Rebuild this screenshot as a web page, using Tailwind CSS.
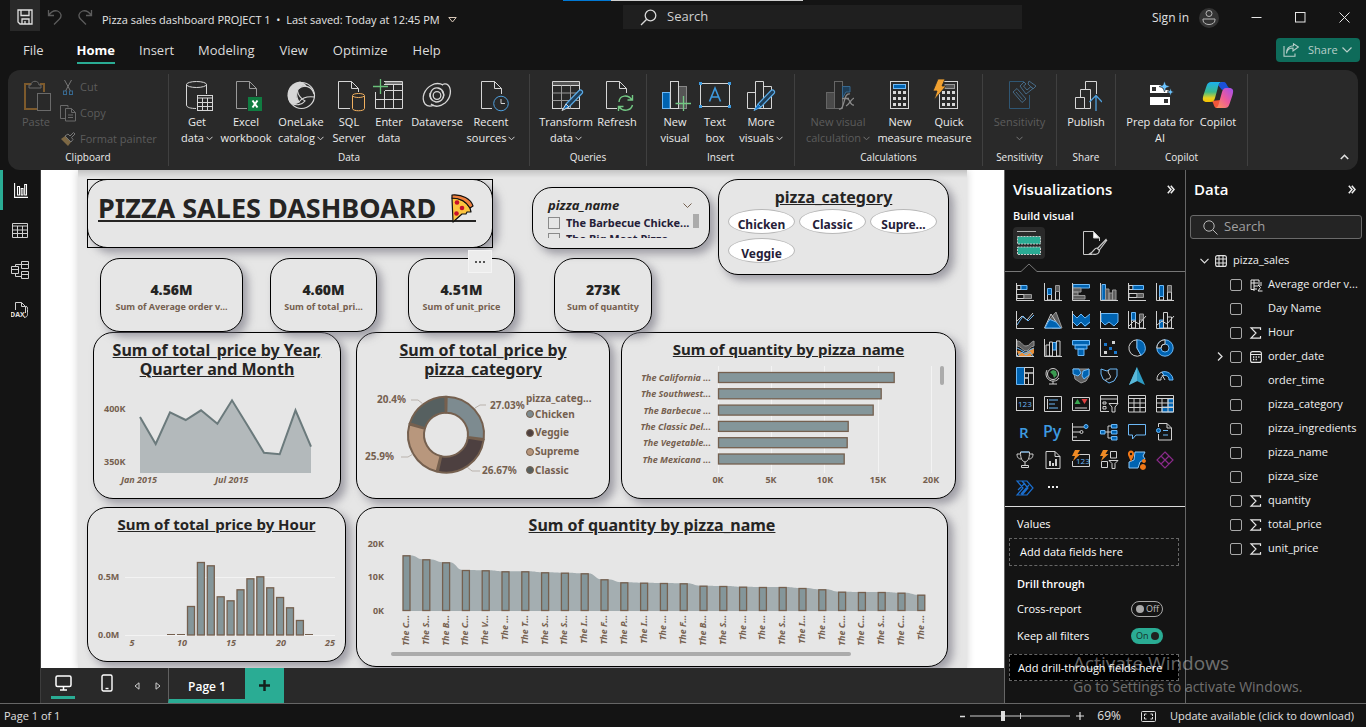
<!DOCTYPE html>
<html lang="en">
<head>
<meta charset="utf-8">
<title>Pizza sales dashboard PROJECT 1</title>
<script src="https://cdn.jsdelivr.net/npm/@tailwindcss/browser@4"></script>
</head>
<body class="flex h-screen flex-col overflow-hidden bg-[#141414] font-['Open_Sans','Noto_Sans',sans-serif] text-[11px] text-white">

<!-- title bar -->
<header class="relative flex h-9 shrink-0 items-start pl-[10px]">
  <div class="absolute left-[563px] top-0 flex h-px w-[240px]"><span class="w-12 bg-[#0078d4]"></span><span class="flex-1 bg-[#d0d0d0]"></span></div>
  <button aria-label="Save" class="flex h-[31px] w-[30px] items-center justify-center bg-[#292929] pt-[3px]">
    <svg width="16" height="16" viewBox="0 0 16 16" fill="none" stroke="#e0e0e0" stroke-width="1.3"><path d="M1 1H15V15H3L1 13ZM4 1V6.500H12V1M5 15V10H12V15M8 12V15"/></svg>
  </button>
  <button aria-label="Undo" class="ml-[7px] mt-[9px]"><svg width="16" height="16" viewBox="0 0 16 16" fill="none" stroke="#5c5c5c" stroke-width="1.3"><path d="M1.500 1V6.500H7M1.500 6.500C4 3 7 1 10.500 2C14.500 3.500 15 7.500 12.500 10L7 15.500"/></svg></button>
  <button aria-label="Redo" class="ml-[14px] mt-[9px]"><svg width="16" height="16" viewBox="0 0 16 16" fill="none" stroke="#5c5c5c" stroke-width="1.3"><path d="M14.500 1V6.500H9M14.500 6.500C12 3 9 1 5.500 2C1.500 3.500 1 7.500 3.500 10L9 15.500"/></svg></button>
  <button class="ml-[9px] mt-[11px] flex w-[365px] items-center gap-2 whitespace-nowrap leading-[18px] text-[#e6e6e6]">Pizza sales dashboard PROJECT 1 &nbsp;•&nbsp; Last saved: Today at 12:45 PM
    <svg width="9" height="6" viewBox="0 0 9 6" fill="none" stroke="#d8c8b8"><path d="M.8.5H8.200L4.500 5Z"/></svg></button>
  <label class="ml-[156px] mt-[5px] flex h-6 w-[399px] items-center bg-[#1f1f1f] pl-[17px]">
    <svg width="17" height="17" viewBox="0 0 17 17" fill="none" stroke="#d8d8d8" stroke-width="1.3"><circle cx="10.500" cy="6.500" r="5.300"/><path d="M6.700 10.300L1 16"/></svg>
    <input aria-label="Search" placeholder="Search" class="ml-[10px] w-[300px] bg-transparent text-[13px] outline-none placeholder:text-[#d0d0d0]">
  </label>
  <div class="ml-auto flex h-[35px] items-center">
    <button class="text-[12px] text-[#e0e0e0]">Sign in</button>
    <svg class="ml-[10px]" width="20" height="20" viewBox="0 0 20 20" fill="none" stroke="#b8b8b8"><circle cx="10" cy="10" r="10" fill="#333" stroke="none"/><circle cx="10" cy="5.500" r="3"/><path d="M4 11H16V12C16 18 4 18 4 12Z"/></svg>
    <button aria-label="Minimize" class="ml-[32px]"><svg width="11" height="11" viewBox="0 0 11 11" stroke="#e6e6e6"><path d="M.5 5.500H10.500"/></svg></button>
    <button aria-label="Maximize" class="ml-[33px]"><svg width="11" height="11" viewBox="0 0 11 11" fill="none" stroke="#e6e6e6"><rect x=".5" y=".5" width="9.500" height="9.500"/></svg></button>
    <button aria-label="Close" class="ml-[33px] mr-[16px]"><svg width="11" height="11" viewBox="0 0 11 11" stroke="#e6e6e6"><path d="M.5.5L10.500 10.500M10.500.5L.5 10.500"/></svg></button>
  </div>
</header>

<!-- ribbon tabs -->
<nav class="flex h-[34px] shrink-0 items-start pl-[23px] pr-[6px] text-[13px] leading-[28px] text-[#dcdcdc]">
  <a href="#" class="mr-[33px]">File</a>
  <a href="#" class="mr-[24px] h-[28px] border-b-2 border-[#2aac94] font-bold text-white">Home</a>
  <a href="#" class="mr-[24px]">Insert</a>
  <a href="#" class="mr-[25px]">Modeling</a>
  <a href="#" class="mr-[25px]">View</a>
  <a href="#" class="mr-[25px]">Optimize</a>
  <a href="#">Help</a>
  <button class="ml-auto mt-[2px] flex h-6 w-[84px] items-center rounded bg-[#0e6b5a] pl-[7px] text-[11px] text-[#b9cfca]">
    <svg width="16" height="14" viewBox="0 0 16 14" fill="none" stroke="#b9cfca" stroke-width="1.100"><path d="M1 3V13.300H12V10.500M3.500 10.500C4 6.500 6.500 5 10 5V8L15.300 4L10.500.8V2.800C6 3 3.500 6 3.500 10.500Z"/></svg>
    <span class="ml-[9px]">Share</span>
    <svg class="ml-[4px]" width="10" height="6" viewBox="0 0 10 6" fill="none" stroke="#b9cfca" stroke-width="1.200"><path d="M.5.5L5 5L9.500.5"/></svg></button>
</nav>

<!-- ribbon -->
<section aria-label="Ribbon" class="relative mx-2 flex h-[100px] shrink-0 rounded-xl bg-[#292929] py-1 leading-4 text-[#ececec]">
  <div class="flex w-[161px] flex-col border-r border-[#404040]">
    <div class="flex min-h-0 flex-1 text-[#5c5c5c]">
      <button class="ml-[12px] flex w-8 flex-col items-center self-start pt-1.5">
        <svg width="32" height="34" viewBox="0 0 32 34" fill="none"><path d="M11 4H5V29H17M20 4H24V12" stroke="#7d5a2c" stroke-width="2"/><path d="M9 8H21V5H19C19 0 11 0 11 5H9Z" stroke="#6a6a6a"/><rect x="17.500" y="13.500" width="13" height="17" stroke="#6a6a6a" fill="#292929"/></svg>
        <span>Paste</span></button>
      <div class="ml-[8px] flex flex-col">
        <button class="flex h-[26px] shrink-0 items-center gap-[4px]"><svg width="16" height="17" viewBox="0 0 16 17" fill="none"><path d="M4.500 1L10.500 12M11.500 1L5.500 12" stroke="#777"/><rect x="3.500" y="12" width="3" height="3.500" stroke="#36688f"/><rect x="9.500" y="12" width="3" height="3.500" stroke="#36688f"/></svg>Cut</button>
        <button class="flex h-[26px] shrink-0 items-center gap-[4px]"><svg width="16" height="17" viewBox="0 0 16 17" fill="none" stroke="#6a6a6a"><path d="M5 13.500H.5V.5H8V2.500M5.500 3.500H11.500L15.500 7.500V16H5.500ZM11.500 3.500V7.500H15.500M8 10H13M8 12.500H13"/></svg>Copy</button>
        <button class="flex h-[26px] shrink-0 items-center gap-[4px]"><svg width="16" height="17" viewBox="0 0 16 17" fill="none"><path d="M1 8L8 15L11 11L5 5Z" fill="#7d6844"/><path d="M5 5L8 3L10 5L13.500 1.500L15 3L11.500 6.500L13 8.500L11 11Z" stroke="#777"/></svg>Format painter</button>
      </div>
    </div>
    <span class="text-center text-[10px] leading-[18px]">Clipboard</span>
  </div>

  <div class="flex w-[361px] flex-col border-r border-[#404040]">
    <div class="flex min-h-0 flex-1 pl-1">
      <button class="flex w-12 flex-col items-center whitespace-nowrap pt-1.5"><svg class="mb-[2px] shrink-0" width="34" height="32" viewBox="-1 0 34 32" fill="none" stroke="#d6d6d6"><ellipse cx="15.500" cy="4.500" rx="10" ry="3"/><path d="M5.500 4.500V25C5.500 27.500 10 28.500 15 28.500M25.500 4.500V14"/><rect x="16.500" y="15.500" width="15" height="15" fill="#292929"/><path d="M16.500 18H31.500M16.500 22.500H31.500M16.500 26.500H31.500M21.500 18V30.500M26.500 18V30.500"/></svg>Get<span class="flex items-center gap-[2px]">data<svg width="7" height="5" viewBox="0 0 7 5" fill="none" stroke="#d0d0d0"><path d="M.5.8L3.500 3.800L6.500.8"/></svg></span></button>
      <button class="flex w-[50px] flex-col items-center whitespace-nowrap pt-1.5"><svg class="mb-[2px] shrink-0" width="34" height="32" viewBox="-1 0 34 32" fill="none" stroke="#9a9a9a"><path d="M17 28.500H6.500V1.500H19.500L26.500 8.500V16M19.500 1.500V8.500H26.500"/><rect x="18" y="17" width="14" height="14" fill="#107c41" stroke="none"/><path d="M22.500 20.500L27.500 27.500M27.500 20.500L22.500 27.500" stroke="#fff" stroke-width="2"/></svg>Excel<span>workbook</span></button>
      <button class="flex w-[60px] flex-col items-center whitespace-nowrap pt-1.5"><svg class="mb-[2px] shrink-0" width="32" height="32" viewBox="0 0 32 32" fill="none" stroke="#d6d6d6" stroke-width="1.200"><path d="M5 22C1 15 3 4 15 2C17 3 20 4 21 6C16 5 13 8 12 12C11 17 12 19 14 22C11 24 7 24 5 22Z" fill="#d6d6d6"/><circle cx="16.500" cy="15.500" r="13"/><path d="M13 9C19 4 27 6 29 14M14 22C17 18 22 16 29.500 17M6 23C11 26 17 25 20 21C15 18 13 14 12.500 11"/></svg>OneLake<span class="flex items-center gap-[2px]">catalog<svg width="7" height="5" viewBox="0 0 7 5" fill="none" stroke="#d0d0d0"><path d="M.5.8L3.500 3.800L6.500.8"/></svg></span></button>
      <button class="flex w-9 flex-col items-center whitespace-nowrap pt-1.5"><svg class="mb-[2px] shrink-0" width="34" height="32" viewBox="-1 0 34 32" fill="none" stroke="#d6d6d6"><path d="M17 28.500H5.500V1.500H18.500L25.500 8.500V12M18.500 1.500V8.500H25.500"/><g stroke="#f0b060" fill="#292929"><path d="M19.500 16V28.500C19.500 31.500 31.500 31.500 31.500 28.500V16"/><ellipse cx="25.500" cy="15.500" rx="6" ry="2"/></g></svg>SQL<span>Server</span></button>
      <button class="flex w-11 flex-col items-center whitespace-nowrap pt-1.5"><svg class="mb-[2px] shrink-0 overflow-visible" width="32" height="32" viewBox="0 0 32 32" fill="none" stroke="#d6d6d6"><path d="M11 1.500H29.500V28.500H2.500V12M11 4.500H29M12 10.500H29.500M2.500 19.500H29.500M11.500 11V28.500M20.500 4V28.500"/><path d="M12 3H29" stroke="#777" stroke-width="2"/><path d="M0 6.500H15M7.500 -1V14" stroke="#69c07a" stroke-width="1.300"/></svg>Enter<span>data</span></button>
      <button class="flex w-[52px] flex-col items-center whitespace-nowrap pt-1.5"><svg class="mb-[2px] shrink-0" width="32" height="32" viewBox="0 0 32 32" fill="none" stroke="#d6d6d6" stroke-width="1.300"><path d="M22 5C19 3 14 3 11 5C3 9 0 18 4 24C7 27 11 26 13 25"/><path d="M10 24C14 28 20 26 24 23C30 18 31 9 27 5C25 3 22 4 21 5"/><path d="M11 20C7 14 11 7 17 8C22 9 24 14 22 18"/><path d="M21 11C25 16 21 22 15 22C10 21 8 17 9 13"/><circle cx="16" cy="15.500" r="3.800"/></svg>Dataverse</button>
      <button class="flex w-14 flex-col items-center whitespace-nowrap pt-1.5"><svg class="mb-[2px] shrink-0" width="36" height="32" viewBox="-2 0 36 32" fill="none" stroke="#d6d6d6"><path d="M17 28.500H6.500V1.500H19.500L26.500 8.500V14M19.500 1.500V8.500H26.500"/><circle cx="26" cy="23.500" r="7.300" stroke="#4f9fdc" fill="#292929"/><path d="M26 19V23.500H30"/></svg>Recent<span class="flex items-center gap-[2px]">sources<svg width="7" height="5" viewBox="0 0 7 5" fill="none" stroke="#d0d0d0"><path d="M.5.8L3.500 3.800L6.500.8"/></svg></span></button>
    </div>
    <span class="text-center text-[10px] leading-[18px]">Data</span>
  </div>

  <div class="flex w-[117px] flex-col border-r border-[#404040]">
    <div class="flex min-h-0 flex-1 pl-1.5">
      <button class="flex w-[60px] flex-col items-center whitespace-nowrap pt-1.5"><svg class="mb-[2px] shrink-0" width="36" height="32" viewBox="-2 0 36 32" fill="none" stroke="#d6d6d6"><path d="M2.500 5V1.500H29.500V5" fill="#555"/><rect x="2.500" y="5.500" width="27" height="23"/><path d="M2.500 13H29.500M2.500 20.500H29.500M11.500 5.500V28.500M20.500 5.500V28.500" stroke="#999"/><path d="M16 24L29 10.500C31 9 34 11.500 32 13.500L19 27L14.500 28.500Z" stroke="#5aaae6" fill="#1f3e58" stroke-width="1.200"/><path d="M16 24L12 30.500L19 27Z" fill="#0c6cc0"/></svg>Transform<span class="flex items-center gap-[2px]">data<svg width="7" height="5" viewBox="0 0 7 5" fill="none" stroke="#d0d0d0"><path d="M.5.8L3.500 3.800L6.500.8"/></svg></span></button>
      <button class="flex w-[42px] flex-col items-center whitespace-nowrap pt-1.5"><svg class="mb-[2px] shrink-0" width="34" height="32" viewBox="-1 0 34 32" fill="none" stroke="#d6d6d6"><path d="M16 28.500H5.500V1.500H18.500L25.500 8.500V13M18.500 1.500V8.500H25.500"/><g stroke="#73c884" stroke-width="1.400"><path d="M18 22C18.500 15 27 14 31 20M31.500 15V20H26.500M31.500 25C30 31 22 32 18 27M17.500 31V26.500H22.500"/></g></svg>Refresh</button>
    </div>
    <span class="text-center text-[10px] leading-[18px]">Queries</span>
  </div>

  <div class="flex w-[148px] flex-col border-r border-[#404040]">
    <div class="flex min-h-0 flex-1 pl-1.5">
      <button class="flex w-11 flex-col items-center whitespace-nowrap pt-1.5"><svg class="mb-[2px] shrink-0" width="32" height="32" viewBox="0 0 32 32" fill="none"><rect x="19.500" y="6.500" width="8" height="22" fill="#555" stroke="#888"/><rect x="3.500" y="12.500" width="7.500" height="16" fill="#0063b1" stroke="#6cb8f6"/><rect x="11.500" y="1.500" width="8" height="27" fill="#292929" stroke="#d6d6d6"/><path d="M16.500 23.500H32M24.500 16V31" stroke="#73c884" stroke-width="1.300"/></svg>New<span>visual</span></button>
      <button class="flex w-9 flex-col items-center whitespace-nowrap pt-1.5"><svg class="mb-[2px] shrink-0" width="32" height="32" viewBox="0 0 32 32" fill="none"><rect x="1.500" y="3.500" width="29" height="23" stroke="#d6d6d6"/><path d="M0 2H3V5H0ZM29 2H32V5H29ZM0 25H3V28H0ZM29 25H32V28H29Z" fill="#3e9be0"/><path d="M10.500 21.500L16 8L21.500 21.500M12.300 17H19.700" stroke="#3e9be0" stroke-width="1.600"/></svg>Text<span>box</span></button>
      <button class="flex w-14 flex-col items-center whitespace-nowrap pt-1.5"><svg class="mb-[2px] shrink-0" width="32" height="32" viewBox="0 0 32 32" fill="none" stroke="#d6d6d6"><path d="M2.500 12.500H10.500V28.500H2.500ZM10.500 1.500H18.500V28.500H10.500ZM18.500 6.500H26.500V28.500H18.500Z"/><path d="M13 24L26 10.500C28 9 31 11.500 29 13.500L16 27L11.500 28.500Z" stroke="#5aaae6" fill="#1f3e58" stroke-width="1.200"/><path d="M13 24L9 30.500L16 27Z" fill="#0c6cc0" stroke="#5aaae6"/></svg>More<span class="flex items-center gap-[2px]">visuals<svg width="7" height="5" viewBox="0 0 7 5" fill="none" stroke="#d0d0d0"><path d="M.5.8L3.500 3.800L6.500.8"/></svg></span></button>
    </div>
    <span class="text-center text-[10px] leading-[18px]">Insert</span>
  </div>

  <div class="flex w-[188px] flex-col border-r border-[#404040]">
    <div class="flex min-h-0 flex-1 pl-1.5">
      <button class="flex w-[74px] flex-col items-center whitespace-nowrap pt-1.5 text-[#5c5c5c]"><svg class="mb-[2px] shrink-0" width="32" height="32" viewBox="0 0 32 32" fill="none" stroke="#666"><rect x="4.500" y="12.500" width="8" height="16" fill="#4a4a4a"/><rect x="12.500" y="1.500" width="8" height="27"/><path d="M20.500 6.500H28V12H24L20.500 18Z" fill="#1f3e58" stroke="#36688f"/><path d="M17 29C23 31 21 12 28 14M20 18.500H27M25 19C28 18 28 26 32 25M32 18C29 19 28 24 24 26" stroke="#8a8a8a" stroke-width="1.300"/></svg>New visual<span class="flex items-center gap-[2px]">calculation<svg width="7" height="5" viewBox="0 0 7 5" fill="none" stroke="#777"><path d="M.5.8L3.500 3.800L6.500.8"/></svg></span></button>
      <button class="flex w-[50px] flex-col items-center whitespace-nowrap pt-1.5"><svg class="mb-[2px] shrink-0" width="32" height="32" viewBox="0 0 32 32" fill="none"><rect x="6.500" y="1.500" width="18" height="27" stroke="#d6d6d6"/><rect x="9.500" y="4.500" width="12" height="4" fill="#0063b1" stroke="#6cb8f6"/><path d="M9 12.500H22M9 18.500H22M9 24.500H22" stroke="#d6d6d6" stroke-width="3" stroke-dasharray="3 2"/></svg>New<span>measure</span></button>
      <button class="flex w-12 flex-col items-center whitespace-nowrap pt-1.5"><svg class="mb-[2px] shrink-0 overflow-visible" width="34" height="32" viewBox="-1 0 34 32" fill="none"><rect x="6.500" y="1.500" width="18" height="27" stroke="#d6d6d6"/><rect x="12" y="4.500" width="9.500" height="4" fill="#555" stroke="#999"/><path d="M9 12.500H22M9 18.500H22M9 24.500H22" stroke="#d6d6d6" stroke-width="3" stroke-dasharray="3 2"/><path d="M5-1H12L9 6H13L1 20L4 11H0Z" fill="#f0a030" stroke="#292929" stroke-width=".8"/></svg>Quick<span>measure</span></button>
    </div>
    <span class="text-center text-[10px] leading-[18px]">Calculations</span>
  </div>

  <div class="flex w-[74px] flex-col border-r border-[#404040]">
    <button class="flex min-h-0 flex-1 flex-col items-center whitespace-nowrap pt-1.5 text-[#5c5c5c]"><svg class="mb-[2px] shrink-0" width="32" height="32" viewBox="0 0 32 32" fill="none" stroke="#2f5673"><path d="M20 1.500H5.500V28.500H25.500V15" /><path d="M9 12L13 8.500L22 19L18 22.500ZM12 12L18.500 19.500M16 6L20 2L22 4L19.500 6L23 10L27 6.500L29 8.500L22 14ZM25 1L32 6L29 9L24 4Z" stroke="#466a86"/></svg>Sensitivity<svg class="mt-[6px] shrink-0" width="7" height="5" viewBox="0 0 7 5" fill="none" stroke="#777"><path d="M.5.8L3.500 3.800L6.500.8"/></svg></button>
    <span class="text-center text-[10px] leading-[18px]">Sensitivity</span>
  </div>

  <div class="flex w-[59px] flex-col border-r border-[#404040]">
    <button class="flex min-h-0 flex-1 flex-col items-center whitespace-nowrap pt-1.5"><svg class="mb-[2px] shrink-0" width="32" height="32" viewBox="0 0 32 32" fill="none" stroke="#d6d6d6"><path d="M5.500 17.500H14.500V28.500H5.500ZM10.500 17V9.500H20.500V28.500H14.500M15.500 9V1.500H26.500V14"/><path d="M26 31V15.500M19.500 22L26 15.500L32 22" stroke="#4f9fdc" stroke-width="1.300"/></svg>Publish</button>
    <span class="text-center text-[10px] leading-[18px]">Share</span>
  </div>

  <div class="flex w-[132px] flex-col border-r border-[#404040]">
    <div class="flex min-h-0 flex-1 pl-1.5">
      <button class="flex w-[76px] flex-col items-center whitespace-nowrap pt-1.5"><svg class="mb-[2px] shrink-0" width="32" height="32" viewBox="0 0 32 32"><path d="M6 5H17L19 9L26 11V13H6ZM6 17H26V25H6Z" fill="#fff"/><path d="M8 7H12V11H8ZM20 19H24V23H20Z" fill="#333"/><path d="M20.500 1L22 5L26 6.500L22 8L20.500 12L19 8L15 6.500L19 5ZM26.500 8L27.500 11L30 12L27.500 13L26.500 16L25.500 13L23 12L25.500 11Z" fill="#6cc4ff" stroke="#292929" stroke-width=".6"/></svg>Prep data for<span>AI</span></button>
      <button class="flex w-10 flex-col items-center whitespace-nowrap pt-1.5"><svg class="mb-[2px] shrink-0" width="32" height="32" viewBox="0 0 32 32"><defs><linearGradient id="ca" x1="0" y1="0" x2="0" y2="1"><stop offset="0" stop-color="#1ab0f0"/><stop offset=".5" stop-color="#3cb98a"/><stop offset=".8" stop-color="#e8d020"/><stop offset="1" stop-color="#f5c000"/></linearGradient><linearGradient id="cb" x1="1" y1="0" x2="0" y2="1"><stop offset="0" stop-color="#a050f0"/><stop offset=".5" stop-color="#ee5a9a"/><stop offset="1" stop-color="#ff9a50"/></linearGradient></defs>
        <path d="M19 2H22C25 2 25 8 28 8L20 10L16 5Z" fill="#1a50d8"/><path d="M9 21C12 21 11 28 15 28H20L19 20Z" fill="#f0563a"/>
        <path d="M9 2H20C17 2 16.500 5 15.500 9L13 18C12 21 11 22 8 22H5C1 22 0 20 1.500 15L4.500 6C5.500 3 7 2 9 2Z" fill="url(#ca)"/><path d="M23 28H13C16 28 16.500 25 17.500 21L20 12C21 9 22 8 24 8H27C31 8 32 10 30.500 15L27.500 24C26.500 27 25 28 23 28Z" fill="url(#cb)"/></svg>Copilot</button>
    </div>
    <span class="text-center text-[10px] leading-[18px]">Copilot</span>
  </div>
  <button aria-label="Collapse ribbon" class="mb-[6px] ml-auto mr-[9px] self-end"><svg width="9" height="6" viewBox="0 0 9 6" fill="none" stroke="#e0e0e0" stroke-width="1.600"><path d="M.8 5L4.500 1.300L8.200 5"/></svg></button>
</section>

<main class="flex min-h-0 flex-1">
  <!-- view switcher -->
  <nav class="flex w-[41px] shrink-0 flex-col border-r border-[#3c3c3c]">
    <button aria-label="Report view" class="flex h-10 items-center border-l-[3px] border-[#2aac94] pl-[11px]"><svg width="14" height="15" viewBox="0 0 14 15" fill="none" stroke="#fff" stroke-width="1.100"><path d="M.6 0V14.400H14M3.500 3.500H5.500V12H3.500ZM7.200 5.500H9V12H7.200ZM10.700 1.500H12.500V12H10.700Z"/></svg></button>
    <button aria-label="Table view" class="flex h-10 items-center justify-center"><svg width="16" height="15" viewBox="0 0 16 15" fill="none" stroke="#d0d0d0"><path d="M.5.5H15.500V14.500H.5ZM.5 3H15.500M.5 7H15.500M.5 10.500H15.500M5.500 3V14.500M10.500 3V14.500"/></svg></button>
    <button aria-label="Model view" class="flex h-10 items-center justify-center"><svg width="18" height="18" viewBox="0 0 18 18" fill="none" stroke="#d0d0d0"><path d="M.5 5.500H7.500V12.500H.5ZM.5 8.500H7.500M10.500.5H17.500V7.500H10.500ZM10.500 3.500H17.500M10.500 10.500H17.500V17.500H10.500ZM10.500 13.500H17.500M4.500 5V3.500H10M4.500 13V15.500H10"/></svg></button>
    <button aria-label="DAX query view" class="flex h-10 items-center justify-center"><svg width="18" height="18" viewBox="0 0 18 18" fill="none" stroke="#d0d0d0"><path d="M4.500 9V1.500H10.500L14.500 5.500V12M10.500 1.500V5.500H14.500M15 5C17 6 16.500 8 16.500 10C16.500 14 17 16 13 16.500"/><text x="-1" y="16" font-size="7" font-weight="bold" fill="#e0e0e0" stroke="none">DAX</text></svg></button>
  </nav>

  <div class="flex min-w-0 flex-1 flex-col">
    <!-- report canvas -->
    <section id="canvas" class="min-h-0 flex-1 overflow-hidden bg-white font-['Noto_Sans',sans-serif] font-bold text-[#252423]">
      <div class="relative mx-auto h-full w-[889px] bg-[#e6e6e6] shadow-[0_0_8px_#cfcfcf]">
        <div class="absolute inset-x-0 top-0 h-2 bg-gradient-to-b from-black/15 to-transparent"></div>

        <article class="absolute left-[15px] top-[162px] flex h-[167px] w-[248px] flex-col rounded-[20px] border border-black bg-[#e6e6e6] pt-[8px] shadow-[5px_5px_9px_#6e6c7a99]">
          <h2 class="text-center text-[16px] leading-[19px] underline">Sum of total_price by Year,<br>Quarter and Month</h2>
          <svg width="246" height="118" viewBox="94 379 246 118" font-size="9" fill="#75604f"><path d="M140 417L155.700 444L170 412.300L185.700 420L201 410.300L217.400 423.700L232 400.300L248.300 426.700L264 452.700L279.700 454.300L295.500 410.300L311 446.700V473H140Z" fill="#b3b9bb"/><path d="M140 417L155.700 444L170 412.300L185.700 420L201 410.300L217.400 423.700L232 400.300L248.300 426.700L264 452.700L279.700 454.300L295.500 410.300L311 446.700" fill="none" stroke="#6b7a7c" stroke-width="2"/>
            <text x="104" y="412">400K</text><text x="104" y="465">350K</text><g font-style="italic"><text x="121" y="483">Jan 2015</text><text x="215" y="483">Jul 2015</text></g></svg>
        </article>

        <article class="absolute left-[278px] top-[162px] flex h-[167px] w-[254px] flex-col rounded-[20px] border border-black bg-[#e6e6e6] pt-[8px] shadow-[5px_5px_9px_#6e6c7a99]">
          <h2 class="text-center text-[16px] leading-[19px] underline">Sum of total_price by<br>pizza_category</h2>
          <svg width="252" height="118" viewBox="357 379 252 118" font-size="10" fill="#75604f"><g id="donut" stroke="#75604f" stroke-width="2"></g>
            <path d="M411 400H418L423 404M475 408L480 405H486M401 457H408L413 454M467 467L472 471H480" fill="none" stroke="#b9b2ac"/>
            <text x="377" y="403">20.4%</text><text x="490" y="409">27.03%</text><text x="365" y="460">25.9%</text><text x="482" y="474">26.67%</text><text x="526" y="402">pizza_categ...</text>
            <g stroke="#75604f"><circle cx="530" cy="414" r="3.500" fill="#7d8b90"/><circle cx="530" cy="433" r="3.500" fill="#4d4040"/><circle cx="530" cy="452" r="3.500" fill="#b8977d"/><circle cx="530" cy="470" r="3.500" fill="#566060"/></g>
            <text x="535" y="418">Chicken</text><text x="535" y="436">Veggie</text><text x="535" y="455">Supreme</text><text x="535" y="474">Classic</text></svg>
        </article>

        <article class="absolute left-[543px] top-[162px] flex h-[167px] w-[335px] flex-col rounded-[20px] border border-black bg-[#e6e6e6] pt-[6px] shadow-[5px_5px_9px_#6e6c7a99]">
          <h2 class="text-center text-[15px] leading-[20px] underline">Sum of quantity by pizza_name</h2>
          <svg width="333" height="138" viewBox="622 359 333 138" font-size="9" fill="#75604f"><path d="M718.500 366V473M771.500 366V473M824.500 366V473M878.500 366V473M931.500 366V473" stroke="#f3f3f3"/><rect x="940" y="366" width="4" height="19" rx="2" fill="#ababab"/><g id="hbars"></g>
            <g text-anchor="middle"><text x="718" y="483">0K</text><text x="771" y="483">5K</text><text x="825" y="483">10K</text><text x="878" y="483">15K</text><text x="931" y="483">20K</text></g></svg>
        </article>

        <article class="absolute left-[9px] top-[337px] flex h-[155px] w-[259px] flex-col rounded-[20px] border border-black bg-[#e6e6e6] pt-[6px] shadow-[5px_5px_9px_#6e6c7a99]">
          <h2 class="text-center text-[15px] leading-[20px] underline">Sum of total_price by Hour</h2>
          <svg width="257" height="126" viewBox="88 534 257 126" font-size="9" fill="#75604f"><path d="M125 577.500H335M125 635.500H335" stroke="#f3f3f3"/><g id="hours"></g><path d="M167 634.500H175M177 634.500H185M305 634.500H313" stroke="#75604f"/>
            <text x="98" y="580">0.5M</text><text x="98" y="638">0.0M</text><g font-style="italic" text-anchor="middle"><text x="132" y="646">5</text><text x="182" y="646">10</text><text x="231" y="646">15</text><text x="281" y="646">20</text><text x="330" y="646">25</text></g></svg>
        </article>

        <article class="absolute left-[278px] top-[337px] flex h-[160px] w-[592px] flex-col rounded-[20px] border border-black bg-[#e6e6e6] pt-[8px] shadow-[5px_5px_9px_#6e6c7a99]">
          <h2 class="text-center text-[16px] leading-[19px] underline">Sum of quantity by pizza_name</h2>
          <svg width="590" height="130" viewBox="357 535 590 130" font-size="9" fill="#75604f"><g id="ribbonchart"></g><g text-anchor="end"><text x="384" y="547">20K</text><text x="384" y="580">10K</text><text x="384" y="614">0K</text></g><rect x="391" y="652" width="460" height="4" rx="2" fill="#ababab"/></svg>
        </article>

        <article class="absolute left-[9px] top-[9px] h-[69px] w-[406px] rounded-[20px] border border-black bg-[#e6e6e6] pl-[10px] pt-[11px] shadow-[5px_5px_9px_#6e6c7a99]">
          <span class="absolute -inset-px border border-black"></span>
          <h1 class="flex text-[27px] leading-[34px] whitespace-nowrap"><span class="underline decoration-2 underline-offset-2">PIZZA SALES DASHBOARD</span><span class="relative flex w-[40px] justify-end"><span class="absolute inset-x-0 bottom-[3px] h-[2px] bg-[#252423]"></span>
            <svg class="relative mr-[2px] mt-[3px]" width="24" height="29" viewBox="0 0 24 29" stroke="#111" stroke-width="1.200" stroke-linejoin="round"><path d="M2 4C10 4 17 8 20 14L21 18L17 18L16 20L12 20L3 28Z" fill="#fcc43e"/><path d="M2 1C12 0 21 5 23 12L20 14C16 7 9 4 2 4Z" fill="#f0813e"/><g fill="#c8102a" stroke="none"><circle cx="7" cy="8.500" r="2.300"/><circle cx="12" cy="14" r="2.300"/><circle cx="6.500" cy="19.500" r="2.300"/></g></svg></span></h1>
        </article>

        <article class="absolute left-[22px] top-[88px] flex h-[74px] w-[143px] flex-col items-center rounded-[20px] border border-black bg-[#e6e6e6] pt-[21px] shadow-[5px_5px_9px_#6e6c7a99]"><b class="text-[14px] leading-[19px]">4.56M</b><span class="text-[9px] leading-[16px] text-[#75604f]">Sum of Average order v...</span></article>
        <article class="absolute left-[192px] top-[88px] flex h-[74px] w-[107px] flex-col items-center rounded-[20px] border border-black bg-[#e6e6e6] pt-[21px] shadow-[5px_5px_9px_#6e6c7a99]"><b class="text-[14px] leading-[19px]">4.60M</b><span class="text-[9px] leading-[16px] text-[#75604f]">Sum of total_pri...</span></article>
        <article class="absolute left-[330px] top-[88px] flex h-[74px] w-[107px] flex-col items-center rounded-[20px] border border-black bg-[#e6e6e6] pt-[21px] shadow-[5px_5px_9px_#6e6c7a99]"><b class="text-[14px] leading-[19px]">4.51M</b><span class="text-[9px] leading-[16px] text-[#75604f]">Sum of unit_price</span></article>
        <article class="absolute left-[476px] top-[88px] flex h-[74px] w-[98px] flex-col items-center rounded-[20px] border border-black bg-[#e6e6e6] pt-[21px] shadow-[5px_5px_9px_#6e6c7a99]"><b class="text-[14px] leading-[19px]">273K</b><span class="text-[9px] leading-[16px] text-[#75604f]">Sum of quantity</span></article>
        <button aria-label="More options" class="absolute left-[390px] top-[80px] flex h-[23px] w-6 items-center justify-center gap-[2px] border border-[#f4f4f4] bg-[#ececec]"><i class="size-[2px] bg-[#555]"></i><i class="size-[2px] bg-[#555]"></i><i class="size-[2px] bg-[#555]"></i></button>

        <article class="absolute left-[454px] top-[17px] flex h-[62px] w-[178px] flex-col rounded-[20px] border border-black bg-[#e6e6e6] pl-[15px] pr-[10px] pt-[9px] shadow-[5px_5px_9px_#6e6c7a99]">
          <div class="flex h-[17px] items-center justify-between pr-[7px] text-[13px] italic">pizza_name<svg width="9" height="6" viewBox="0 0 9 6" fill="none" stroke="#75604f"><path d="M.5.5L4.500 4.500L8.500.5"/></svg></div>
          <div class="flex h-[24px] overflow-hidden text-[11px] leading-4">
            <div class="min-w-0 flex-1 whitespace-nowrap pt-px text-[#252038]">
              <label class="flex items-center gap-[6px]"><input type="checkbox" class="size-[12px] shrink-0 appearance-none border border-[#8a8a8a]">The Barbecue Chicke...</label>
              <label class="flex items-center gap-[6px]"><input type="checkbox" class="size-[12px] shrink-0 appearance-none border border-[#8a8a8a]">The Big Meat Pizza</label>
            </div>
            <span class="h-[14px] w-[6px] shrink-0 bg-[#ababab]"></span>
          </div>
        </article>

        <article class="absolute left-[640px] top-[9px] h-[96px] w-[231px] rounded-[20px] border border-black bg-[#e6e6e6] px-[9px] pt-[8px] shadow-[5px_5px_9px_#6e6c7a99]">
          <h2 class="text-center text-[16px] leading-[19px] underline">pizza_category</h2>
          <div class="mt-[2px] flex flex-wrap gap-x-[4px] gap-y-[4px] text-[12px] text-[#252038]">
            <button class="h-[25px] w-[67px] rounded-[50%] border border-[#b8b8b8] bg-white pt-[7px] leading-4">Chicken</button>
            <button class="h-[25px] w-[67px] rounded-[50%] border border-[#b8b8b8] bg-white pt-[7px] leading-4">Classic</button>
            <button class="h-[25px] w-[67px] rounded-[50%] border border-[#b8b8b8] bg-white pt-[7px] leading-4">Supre...</button>
            <button class="h-[25px] w-[67px] rounded-[50%] border border-[#b8b8b8] bg-white pt-[7px] leading-4">Veggie</button>
          </div>
        </article>
      </div>
    </section>

    <!-- page tabs -->
    <nav class="flex h-[35px] shrink-0 bg-[#292929]">
      <button aria-label="Desktop layout" class="ml-[10px] flex h-[31px] w-6 flex-col items-center justify-between border-b-[3px] border-[#2aac94] pt-[7px]"><svg width="17" height="16" viewBox="0 0 17 16" fill="none" stroke="#fff" stroke-width="1.500"><rect x="1" y="1" width="15" height="10.500" rx="1.500"/><path d="M8.500 12V15M5 15H12"/></svg></button>
      <button aria-label="Mobile layout" class="ml-[26px] flex items-start pt-[6px]"><svg width="12" height="18" viewBox="0 0 12 18" fill="none" stroke="#fff" stroke-width="1.400"><rect x="1" y="1" width="10" height="16" rx="1.500"/><path d="M4.500 14.500H7.500"/></svg></button>
      <button aria-label="Previous page" class="ml-[21px] flex items-center"><svg width="6" height="8" viewBox="0 0 6 8" fill="none" stroke="#d0d0d0"><path d="M5 .8V7.200L1 4Z"/></svg></button>
      <button aria-label="Next page" class="ml-[15px] flex items-center"><svg width="6" height="8" viewBox="0 0 6 8" fill="none" stroke="#d0d0d0"><path d="M1 .8V7.200L5 4Z"/></svg></button>
      <a href="#" class="ml-[7px] w-[77px] border-b-4 border-l border-b-[#2aac94] border-l-[#606060] text-center text-[12px] font-semibold leading-[37px]">Page 1</a>
      <button aria-label="New page" class="flex w-[39px] items-center justify-center bg-[#2aac94]"><svg width="11" height="11" viewBox="0 0 11 11" stroke="#14201d" stroke-width="2.500"><path d="M0 5.500H11M5.500 0V11"/></svg></button>
    </nav>
  </div>

  <!-- visualizations pane -->
  <aside class="flex w-[181px] shrink-0 flex-col border-l border-[#666]">
    <div class="flex items-center justify-between pl-2 pr-[10px] pt-[8px]"><h2 class="text-[15px] font-semibold leading-[22px]">Visualizations</h2>
      <button aria-label="Collapse Visualizations"><svg width="8" height="9" viewBox="0 0 8 9" fill="none" stroke="#eee" stroke-width="1.500"><path d="M.8.8L4 4.500L.8 8.200M3.800.8L7 4.500L3.800 8.200"/></svg></button></div>
    <h3 class="mt-[7px] pl-2 font-semibold leading-[18px]">Build visual</h3>
    <div class="mt-[2px] flex items-center gap-[34px] pl-2">
      <button aria-label="Build visual" class="flex size-8 items-center justify-center rounded-sm bg-[#292929]"><svg width="24" height="25" viewBox="0 0 24 25"><path d="M0 .5H19" stroke="#b0b0b0"/><g fill="#2aac94" stroke="#c8c8c8" stroke-dasharray="2 1"><rect x=".5" y="5.500" width="23" height="7.500"/><rect x=".5" y="16" width="23" height="7.500"/></g></svg></button>
      <button aria-label="Format page" class="flex size-8 items-center justify-center"><svg width="26" height="26" viewBox="0 0 26 26" fill="none" stroke="#c8c8c8"><path d="M10 24.500H1.500V1.500H11.500L17.500 8V11"/><path d="M11.500 1.500V8H17.500Z" fill="#fff"/><path d="M24.500 9L15 19M25 10L17 20.500M15 18C12 18 12 22 8 23.500C12 25 17 25 17.500 20.500Z" stroke-width="1.200"/></svg></button>
    </div>
    <svg class="mt-[4px] block h-[9px] w-full" viewBox="0 0 180 9" preserveAspectRatio="none" fill="none" stroke="#777"><path d="M0 8.500H16L24 1L32 8.500H180"/></svg>
    <div id="visuals" class="mt-[6px] grid grid-cols-[repeat(6,28px)] pl-[6px]"></div>
    <div class="mt-[4px] border-t border-[#ddd]"></div>
    <div class="flex flex-col pl-1 pr-[6px] leading-[18px]">
      <h3 class="mt-[8px] pl-2 font-normal">Values</h3>
      <div class="mt-[5px] flex h-7 items-center border border-dashed border-[#666] pl-[10px]">Add data fields here</div>
      <h3 class="mt-[9px] pl-2 font-semibold">Drill through</h3>
      <label class="mt-[7px] flex items-center justify-between pl-2 pr-4">Cross-report<input type="checkbox" role="switch" class="sr-only"><span class="flex h-4 w-8 items-center gap-[2px] rounded-full border border-[#a8a8a8] pl-[4px] text-[9px] text-[#c0c0c0]"><i class="size-2 rounded-full bg-[#a8a8a8]"></i>Off</span></label>
      <label class="mt-[9px] flex items-center justify-between pl-2 pr-4">Keep all filters<input type="checkbox" role="switch" checked class="sr-only"><span class="flex h-4 w-8 items-center gap-[2px] rounded-full bg-[#2aac94] pl-[5px] text-[9px] text-[#14302a]">On<i class="size-2 rounded-full bg-[#202020]"></i></span></label>
      <div class="mt-[9px] flex h-[27px] items-center whitespace-nowrap border border-dashed border-[#666] bg-black pl-[8px]">Add drill-through fields here</div>
    </div>
  </aside>

  <!-- data pane -->
  <aside class="flex w-[181px] shrink-0 flex-col border-l border-[#666]">
    <div class="flex items-center justify-between pl-2 pr-[10px] pt-[8px]"><h2 class="text-[15px] font-semibold leading-[22px]">Data</h2>
      <button aria-label="Collapse Data"><svg width="8" height="9" viewBox="0 0 8 9" fill="none" stroke="#eee" stroke-width="1.500"><path d="M.8.8L4 4.500L.8 8.200M3.800.8L7 4.500L3.800 8.200"/></svg></button></div>
    <label class="ml-1 mr-1 mt-[15px] flex h-6 items-center rounded-[3px] border border-[#6a6a6a] bg-[#242424] pl-[12px]">
      <svg class="shrink-0" width="15" height="15" viewBox="0 0 15 15" fill="none" stroke="#b8b8b8"><circle cx="6" cy="6" r="5.200"/><path d="M9.700 9.700L14.500 14.500"/></svg>
      <input aria-label="Search fields" placeholder="Search" class="ml-[6px] w-full min-w-0 bg-transparent text-[13px] outline-none placeholder:text-[#a0a0a0]"></label>
    <ul id="fields" class="mt-[9px] text-[#f0f0f0]">
      <li class="flex h-6 items-center pl-[14px] pt-px"><svg width="9" height="6" viewBox="0 0 9 6" fill="none" stroke="#e0e0e0" stroke-width="1.200"><path d="M.5.8L4.500 4.800L8.500.8"/></svg><svg class="ml-[6px] mr-[6px]" width="12" height="12" viewBox="0 0 12 12" fill="none" stroke="#e0e0e0" stroke-width="1.100"><rect x=".6" y=".6" width="10.800" height="10.800" rx="2"/><path d="M4 .6V11.400M8 .6V11.400M.6 4H11.400M.6 8H11.400"/></svg>pizza_sales</li>
    </ul>
  </aside>
</main>

<footer class="flex h-6 shrink-0 items-center whitespace-nowrap border-t border-[#666] pl-[4px] pr-[4px] pt-px text-[#e0e0e0]">
  <span>Page 1 of 1</span>
  <button aria-label="Zoom out" class="ml-auto"><svg width="6" height="9" viewBox="0 0 6 9" stroke="#ddd" stroke-width="1.500"><path d="M0 4.500H5"/></svg></button>
  <svg class="ml-[4px]" width="100" height="12" viewBox="0 0 100 12" role="img" aria-label="Zoom level"><path d="M0 6H100M50.500 3V9" stroke="#ccc"/><rect x="31" y="1" width="4" height="10" fill="#ddd"/></svg>
  <button aria-label="Zoom in" class="ml-[6px]"><svg width="8" height="8" viewBox="0 0 8 8" stroke="#ddd" stroke-width="1.200"><path d="M0 4H8M4 0V8"/></svg></button>
  <span class="ml-[13px] text-[12px]">69%</span>
  <button aria-label="Fit to page" class="ml-[20px]"><svg width="15" height="11" viewBox="0 0 15 11" fill="none" stroke="#ddd"><rect x=".5" y=".5" width="14" height="10" rx="1"/><path d="M5.500 3H3.500V5M9.500 3H11.500V5M3.500 6V8H5.500M11.500 6V8H9.500"/></svg></button>
  <a href="#" class="ml-[14px] w-48">Update available (click to download)</a>
</footer>

<div class="pointer-events-none absolute bottom-[31px] right-[56px] w-[237px] whitespace-nowrap text-white/40">
  <p class="text-[19px] leading-7">Activate Windows</p><p class="text-[14px] leading-[19px]">Go to Settings to activate Windows.</p>
</div>

<script>
const B='fill="#0063b1" stroke="#6cb8f6"',G='fill="#5e5e5e" stroke="#999"',W='fill="none" stroke="#d0d0d0"',L='fill="none" stroke="#6cb8f6"';
const p=(d,a)=>`<path d="${d}" ${a}/>`;
const axis=p('M.5 0V17.500H18',W);
const visuals=[
['Stacked bar chart',p('M1 2.500H5V6.500H1ZM1 11.500H8V15.500H1Z',W)+p('M5 2.500H11V6.500H5Z',B)+p('M8 11.500H15.500V15.500H8Z',G)+axis],
['Stacked column chart',p('M3.500 11.500H7.500V17H3.500ZM11.500 8H15.500V17H11.500Z',W)+p('M3.500 5.500H7.500V11.500H3.500Z',B)+p('M11.500 2.500H15.500V8.500H11.500Z',G)+axis],
['Clustered bar chart',p('M1 1.500H17.500V5H1Z',B)+p('M1 5H9V9H1ZM1 9H6V12.500H1ZM1 12.500H13V16H1Z',G)+axis],
['Clustered column chart',p('M2 1.500H5.500V17H2Z',B)+p('M5.500 6H9V17H5.500ZM9 10H12.500V17H9ZM12.500 7H16V17H12.500Z',G)+axis],
['100% stacked bar chart',p('M1 2.500H5V6.500H1ZM1 10.500H9V14.500H1Z',W)+p('M5 2.500H15.500V6.500H5Z',B)+p('M9 10.500H15.500V14.500H9Z',G)+axis],
['100% stacked column chart',p('M3.500 13.500H7.500V17H3.500ZM11.500 9H15.500V17H11.500Z',W)+p('M3.500 2.500H7.500V13.500H3.500Z',B)+p('M11.500 2.500H15.500V9H11.500Z',G)+axis],
['Line chart',p('M1 10L6 5L11 9L17 2',W)+p('M1 14L7 5L12 10L18 4',L)+axis],
['Area chart',p('M5 9L12 1L18 17H8Z',G)+p('M.5 17L7 3L16 17Z',W)+p('M1 17L4 11L6 8.500L12 11L17 17Z',B)],
['Stacked area chart',p('M1 3L5 7L9 3L13 7L18 3V12L13 16L9 12L5 15L1 11Z','fill="#0063b1"')+p('M1 3L5 7L9 3L13 7L18 3M1 11L5 15L9 11L13 15L18 11',L)+axis],
['100% stacked area chart',p('M1 2.500H18V11L14 15L9 11L5 14L1 10Z',B)+axis],
['Line and stacked column',p('M3.500 9H7.500V17H3.500ZM11.500 8H15.500V17H11.500Z',W)+p('M3.500 1.500H7.500V9H3.500Z',B)+p('M11.500 3H15.500V9H11.500Z',G)+p('M1 15L6 10L11 13L18 5',W)+axis],
['Line and clustered column',p('M3.500 9H7.500V17H3.500Z',B)+p('M7.500 1.500H11.500V17H7.500ZM11.500 6H15.500V17H11.500Z',W)+p('M1 14L6 10L11 13L18 5',W)+axis],
['Ribbon chart',p('M1 2C6 2 6 7 10 7S14 3 18 2V7C14 7 13 12 10 12S5 7 1 7Z',G)+p('M1 12C5 11 6 15 9 14S14 9 18 9V14L15 17H3Z','fill="#e8903a"')+p('M1 9L5 11L10 14L14 11L18 9M1 17L6 13L10 16L14 13L17 17',L)+axis],
['Waterfall chart',p('M2 6H5.500V17H2ZM8.500 5H12V10H8.500ZM12.500 2H16V17H12.500Z',W)+p('M8.500 3.500H12V11H8.500Z',B)+p('M5.500 3H8.500V17H5.500Z',W)+axis],
['Funnel',p('M.5 1.500H17.500V6H.5ZM3 6H15V10H3ZM6 10H12V16.500H6Z',B)],
['Scatter chart',axis+p('M4 4H7V7H4ZM9 8H12V11H9ZM14 12H17V15H14Z','fill="#1b78cc"')+p('M12 2H15V5H12ZM4 12H7V15H4Z','fill="#d0d0d0"')],
['Pie chart',p('M9 .8A8.200 8.200 0 1 0 13 16.200L9 9Z',W)+p('M9 .8A8.200 8.200 0 0 1 13 16.200L9 9Z',B)],
['Donut chart',`<circle cx="9" cy="9" r="8.200" ${B}/><circle cx="9" cy="9" r="4" fill="#141414" stroke="#6cb8f6"/>`+p('M9 .8A8.200 8.200 0 0 0 .8 9H5A4 4 0 0 1 9 5Z','fill="#141414" stroke="#d0d0d0"')],
['Treemap',p('M.5.5H8.500V17.500H.5Z',B)+p('M8.500.5H17.500V6H8.500ZM8.500 6H12.500V11H8.500ZM12.500 6H17.500V17.500H12.500ZM8.500 11H12.500V17.500H8.500Z',W)],
['Map',`<circle cx="9" cy="7" r="5.500" ${W}/>`+p('M6 5L9 3L12 4L13 8L10 11L9 8Z','fill="#3a9a50"')+p('M3 3C0 8 4 15 10 14C12 14 14 13 15 11M9 14V17M5 17H13',W)],
['Filled map',p('M1 2H17V9L14 14L9 16L3 12Z',G)+p('M1 2H7L9 6L6 9L1 7ZM11 4L17 2V8L12 12L10 9Z',B)],
['Shape map',p('M1 2L7 4L10 2H17V9L14 14L9 16L3 12L1 7Z',L)+p('M9 3C6 6 12 8 10 11C8 13 5 11 6 14',W)],
['Azure map',p('M9 0L17 18L9 14L1 18Z','fill="#2e9cc4"')+p('M9 0V14L1 18Z','fill="#5bb8d8"')],
['Gauge',p('M1 13A8 8 0 0 1 6 5L8 8.500A4 4 0 0 0 5 13Z',W)+p('M6 5A8.500 8.500 0 0 1 17 13H13A4 4 0 0 0 8 8.500Z',B)+p('M9 13L6 8',W)],
['Card','<rect x=".5" y="2.500" width="17" height="13" fill="none" stroke="#d0d0d0"/><text x="2" y="12" font-size="8" fill="#6cb8f6">123</text>'],
['Multi-row card',p('M.5 1.500H17.500V16.500H.5ZM3.500 4V14',W)+p('M5 5H14M5 9H11M5 13H14',L)],
['KPI',p('M.5 2.500H17.500V15.500H.5ZM3 13H15',W)+p('M2.500 9L5.500 4L8.500 9Z','fill="#3aa850"')+p('M9.500 4H15.500L12.500 9Z','fill="#e04040"')],
['Slicer',p('M.5.500H17.500V4H.5ZM.5 4V16.500H9M3 7H6V9H3ZM3 11.500H6V14H3ZM17.500 4V8',W)+p('M9 8.500H18L15 12V17H12V12Z','fill="#141414" stroke="#d0d0d0"')],
['Table',p('M.5.5H17.500V17H.5ZM.5 3.500H17.500M.5 8H17.500M.5 12.500H17.500M6 3.500V17M12 3.500V17',W)],
['Matrix',p('M6 12H17.500V17H6ZM12 4H17.500V12H12Z',B)+p('M.5.5H17.500V17H.5ZM.5 3.500H17.500M.5 8H17.500M.5 12.500H17.500M6 3.500V17M12 3.500V17',W)],
['R script visual','<text x="3" y="15" font-size="15" font-weight="600" fill="#3e9be0">R</text>'],
['Python visual','<text x="-1" y="14" font-size="16" font-weight="600" fill="#3e9be0">Py</text>'],
['Key influencers',axis+p('M1 4H12M1 9H8M1 14H5',W)+`<circle cx="14" cy="3.500" r="2" ${B}/><circle cx="9.500" cy="9" r="1.500" ${W}/>`],
['Decomposition tree',p('M5 9H8M8 3V15M8 3H11M8 9H11M8 15H11',W)+p('M.5 7.500H5V11H.5ZM11.500 1.500H17V5H11.500ZM11.500 7.500H17V11H11.500ZM11.500 13.500H17V17H11.500Z',B)],
['Q&A',p('M.5 1.500H17.500V12H8L4.500 16V12H.5Z',L)],
['Narrative',p('M2.500 4V.5H11L15.500 5V17H2.500V11M11 .5V5H15.500',W)+`<circle cx="2.500" cy="7.500" r="2" ${B}/>`+p('M7 7.500H12M7 12H12',L)],
['Goals',p('M4.500 1H13.500C13.500 8 12 10 9 11C6 10 4.500 8 4.500 1ZM4 3H1C1 7 3 8 5 8M14 3H17C17 7 15 8 13 8M9 11V15M5.500 16.500H12.500V14.500H5.500Z',W)+p('M5 1H13',L)],
['Paginated report',p('M2 .5H11L16 5.500V17.500H2ZM11 .5V5.500H16',W)+p('M5 10H7V15H5ZM8 12H10V15H8ZM11 8H13V15H11Z','fill="#d0d0d0"')],
['Card (new)','<path d="M7 3.500H17.500V15.500H.5V10" fill="none" stroke="#d0d0d0"/><text x="4" y="13" font-size="8" fill="#6cb8f6">123</text>'+p('M3-1H8L5.500 3H8.500L1 10L3 5H0Z','fill="#f08a24"')],
['Slicer (new)',p('M10.500.5H16.500V7H10.500ZM1.500 10.500H7.500V16.500H1.500Z',W)+p('M9 9.500H18L15 12.500V17.500H12V12.500Z',W)+p('M3-1H8L5.500 3H8.500L1 10L3 5H0Z','fill="#f08a24"')],
['Route map',p('M7 1H17L15 5L17 8L12 11L10 17H1V11L6 9Z','fill="#0063b1" stroke="#8cc8f8"')+p('M3 11L0 4C-1-2 7-2 6 4ZM16 8A2 2 0 1 1 15.900 8ZM15 13A3 3 0 1 1 14.900 13Z','fill="#f07818"')+'<circle cx="3" cy="3" r="1.200" fill="#141414"/>'],
['Power Apps',p('M9 1L17 9L9 17L1 9ZM5 5L13 13M13 5L5 13','fill="none" stroke="#8a2a8a" stroke-width="1.200"')],
['Power Automate',p('M1 2H11L17 9L11 16H1L7 9ZM6 2L12 9L6 16M9 4L2 11M13 6L5 15','fill="none" stroke="#1b6fd0" stroke-width="1.200"')],
['Get more visuals',p('M4 8H6M8 8H10M12 8H14','stroke="#eee" stroke-width="2"')]];
document.getElementById('visuals').innerHTML=visuals.map(([n,s])=>`<button aria-label="${n}" class="flex h-7 items-center pl-[5px]"><svg width="18" height="18" viewBox="0 0 18 18" overflow="visible">${s}</svg></button>`).join('');

const sigma='<path d="M10.500 3V.8H1L6 6L1 11.200H10.500V9" fill="none" stroke="#e8e8e8" stroke-width="1.200"/>';
const icons={s:sigma,
m:'<path d="M4 10.500H1V1H9V3M1 4H4M4 1V12M4 4H12M4 7H8M4 10H7M12 6H8L10.500 8.500L8 12H12.500" fill="none" stroke="#e8e8e8"/>',
d:'<rect x=".6" y=".6" width="10.800" height="10.800" rx="2" fill="none" stroke="#e8e8e8" stroke-width="1.100"/><path d="M.6 3.500H11.400" stroke="#e8e8e8"/><path d="M3 6H9.500M3 8.500H7.500" stroke="#e8e8e8" stroke-width="1.300" stroke-dasharray="1.300 1.300"/>','':''};
document.getElementById('fields').innerHTML+=[['Average order v...','m'],['Day Name',''],['Hour','s'],['order_date','d'],['order_time',''],['pizza_category',''],['pizza_ingredients',''],['pizza_name',''],['pizza_size',''],['quantity','s'],['total_price','s'],['unit_price','s']].map(([n,i])=>
`<li class="flex h-6 items-center whitespace-nowrap pl-[30px] pt-px"><svg class="mr-[6px]" width="8" height="9" viewBox="0 0 8 9" fill="none" stroke="#e0e0e0" stroke-width="1.300">${i=='d'?'<path d="M2 .5L6 4.500L2 8.500"/>':''}</svg><label class="flex items-center"><input type="checkbox" class="size-[12px] appearance-none rounded-[2px] border border-[#a8a8a8]"><svg class="ml-[8px] mr-[6px]" width="12" height="12" viewBox="0 0 12 12" overflow="visible">${icons[i]}</svg>${n}</label></li>`).join('');

const bar=(x,y,w,h)=>`<rect x="${x}" y="${y}" width="${w}" height="${h}" fill="#84969a" stroke="#75604f" stroke-width="1.300"/>`;
document.getElementById('hbars').innerHTML=[['The California ...',894.7],['The Southwest...',881.7],['The Barbecue ...',873.7],['The Classic Del...',848.7],['The Vegetable...',847.7],['The Mexicana ...',844.7]].map(([n,x],i)=>bar(718.5,372.5+16.3*i,x-719,10)+`<text x="711" y="${381+16.3*i}" text-anchor="end" font-style="italic">${n}</text>`).join('');
document.getElementById('hours').innerHTML=[606,562,565.3,596.3,600.3,589.3,578.3,576.3,587.3,597,607.3,620].map((y,i)=>bar(187.5+9.9*i,y+.5,7,634.5-y)).join('');

const q=[555.3,559.3,562.3,570,570.3,571.3,571.3,572.3,572.7,573.3,579.3,582.3,582.7,583,583.3,585.7,586,586.7,587,587,588,589.3,591.7,592,592,592.7,594.7],names='CSBCV-TSSIFPI-FBS--SI-CCSC-';
let area='M403 611V'+q[0];
q.forEach((y,i)=>{const x=403+19.8*i;if(i)area+=`C${x-6} ${q[i-1]} ${x-6} ${y} ${x} ${y}`;area+=`H${x+7}`});
document.getElementById('ribbonchart').innerHTML=`<path d="${area}V611Z" fill="#a4aeb1"/>`+q.map((y,i)=>bar(403+19.8*i,y+.5,7,610-y)+`<text transform="translate(${409+19.8*i} 615) rotate(-90)" text-anchor="end" font-style="italic">The ${names[i]=='-'?'':names[i]}...</text>`).join('');

const arcs=[[0,97.3,'#7d8b90'],[97.3,193.3,'#4d4040'],[193.3,286.500,'#b8977d'],[286.500,360,'#566060']];
const pt=(r,a)=>{const t=(a-90)*Math.PI/180;return (446+r*Math.cos(t)).toFixed(2)+' '+(434.700+r*Math.sin(t)).toFixed(2)};
document.getElementById('donut').innerHTML=arcs.map(([a,b,c])=>`<path d="M${pt(38,a+1)}A38 38 0 0 1 ${pt(38,b-1)}L${pt(22,b-1)}A22 22 0 0 0 ${pt(22,a+1)}Z" fill="${c}"/>`).join('');
</script>
</body>
</html>
